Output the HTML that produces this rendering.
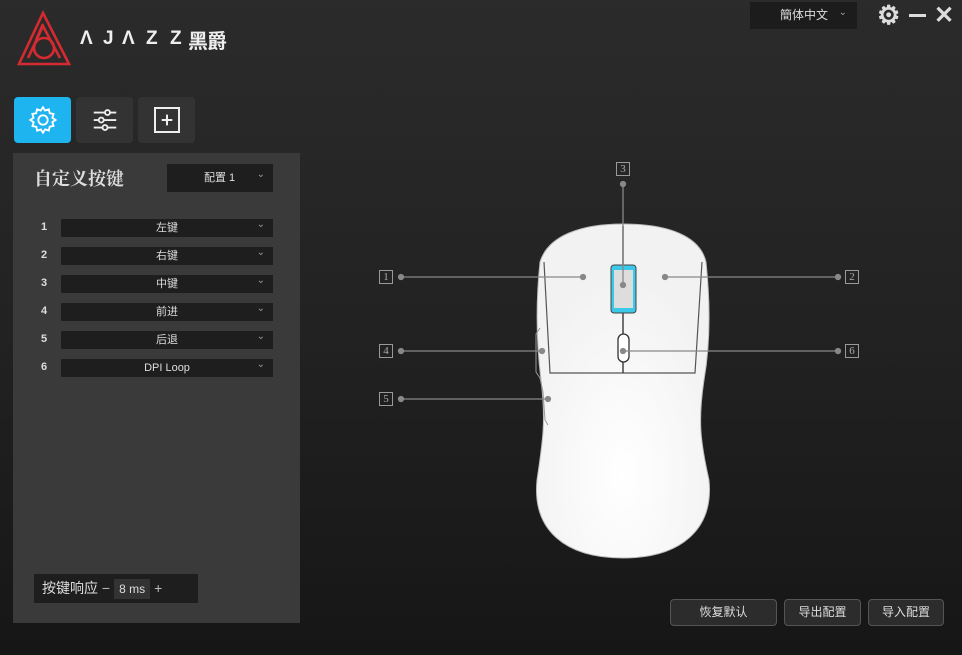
<!DOCTYPE html>
<html><head><meta charset="utf-8"><style>
*{margin:0;padding:0;box-sizing:border-box}
body{width:962px;height:655px;overflow:hidden;background:linear-gradient(180deg,#2b2b2b 0%,#222 50%,#161616 100%);font-family:"Liberation Sans","Noto Sans CJK SC",sans-serif;color:#ddd;position:relative}
.a{position:absolute}
.tab{position:absolute;top:97px;width:57px;height:46px;border-radius:4px;background:#333;display:flex;align-items:center;justify-content:center}
.panel{left:13px;top:153px;width:287px;height:470px;background:#3a3a3a}
.row{position:absolute;left:28px;width:246px;height:18px;font-size:11px}
.row .n{position:absolute;left:13px;top:2px;color:#ddd;font-weight:bold;font-size:11px}
.row .d{position:absolute;left:33px;top:0;width:212px;height:18px;background:#1e1e1e;text-align:center;line-height:18px;color:#ddd}
.row .d:after,.dd:after{content:"⌄";position:absolute;right:8px;top:-3px;color:#999;font-size:10px}
.btn{position:absolute;top:599px;height:27px;background:#2c2c2c;border:1px solid #555;border-radius:4px;font-size:12px;color:#ddd;text-align:center;line-height:25px}
.lbl{position:absolute;width:14px;height:14px;border:1px solid #999;color:#aaa;font-family:"Liberation Serif",serif;font-size:11px;text-align:center;line-height:12px}
</style></head><body>
<svg class="a" style="left:16px;top:10px" width="56" height="56" viewBox="0 0 56 56">
<g fill="none" stroke="#d42a30" stroke-width="2.6" stroke-linejoin="miter">
<path d="M3 54 L27 3 L53 54 Z"/>
<path d="M12 48 L27 16 L44 48"/>
<circle cx="28" cy="38" r="10"/>
<path d="M20 30 L27 14"/>
</g></svg>
<div class="a" style="left:80px;top:28px;font-size:19px;color:#eee;font-weight:bold">
<span class="a" style="left:0">Λ</span><span class="a" style="left:23px">J</span><span class="a" style="left:42px">Λ</span><span class="a" style="left:66px">Z</span><span class="a" style="left:90px">Z</span></div>
<div class="a" style="left:188px;top:25px;font-size:20px;color:#eee;font-weight:bold;letter-spacing:-1px">黑爵</div>

<div class="a" style="left:750px;top:2px;width:107px;height:27px;background:#1c1c1c;font-size:12px;color:#ddd;line-height:27px;padding-left:30px">簡体中文<span style="position:absolute;right:10px;top:-3px;color:#999;font-size:10px">⌄</span></div>
<div class="a" style="left:877px;top:0px;font-size:26px;color:#ddd;font-weight:bold">⚙</div>
<div class="a" style="left:909px;top:14px;width:17px;height:3px;background:#ddd"></div>
<div class="a" style="left:934px;top:1px;font-size:24px;color:#ddd;font-weight:bold">✕</div>

<div class="tab" style="left:14px;background:#1eb4f0"><svg width="32" height="32" viewBox="0 0 24 24" fill="none" stroke="#fff" stroke-width="1.4"><circle cx="12" cy="12" r="3.5"/><path d="M12 2.5l1.6 2.4 2.8-.9.6 2.9 2.9.6-.9 2.8 2.4 1.7-2.4 1.6.9 2.8-2.9.6-.6 2.9-2.8-.9L12 21.5l-1.6-2.4-2.8.9-.6-2.9-2.9-.6.9-2.8L2.5 12l2.4-1.7-.9-2.8 2.9-.6.6-2.9 2.8.9z"/></svg></div>
<div class="tab" style="left:76px"><svg width="30" height="30" viewBox="0 0 24 24" fill="none" stroke="#eee" stroke-width="1.5"><path d="M3 6h18M3 12h18M3 18h18"/><circle cx="14" cy="6" r="2" fill="#333"/><circle cx="9" cy="12" r="2" fill="#333"/><circle cx="12" cy="18" r="2" fill="#333"/></svg></div>
<div class="tab" style="left:138px"><svg width="32" height="32" viewBox="0 0 24 24" fill="none" stroke="#eee" stroke-width="1.5"><path d="M3 3h18v18H3z"/><path d="M12 8v8M8 12h8"/></svg></div>

<div class="a panel"></div>
<div class="a" style="left:34px;top:165px;font-size:18px;color:#ddd;font-family:'Noto Serif CJK SC',serif;font-weight:bold">自定义按键</div>
<div class="a dd" style="left:167px;top:164px;width:106px;height:28px;background:#1e1e1e;font-size:11px;line-height:28px;padding-left:37px;color:#ddd">配置 1</div>
<div class="row" style="top:219px"><span class="n">1</span><span class="d">左键</span></div>
<div class="row" style="top:247px"><span class="n">2</span><span class="d">右键</span></div>
<div class="row" style="top:275px"><span class="n">3</span><span class="d">中键</span></div>
<div class="row" style="top:303px"><span class="n">4</span><span class="d">前进</span></div>
<div class="row" style="top:331px"><span class="n">5</span><span class="d">后退</span></div>
<div class="row" style="top:359px"><span class="n">6</span><span class="d">DPI Loop</span></div>

<div class="a" style="left:34px;top:574px;width:164px;height:29px;background:#1e1e1e;font-size:14px;line-height:29px;padding-left:8px;color:#ddd">按键响应 <span style="color:#bbb">−</span><span style="display:inline-block;background:#333;padding:0 5px;margin:0 4px;font-size:12px;line-height:20px">8 ms</span><span style="color:#bbb">+</span></div>

<svg class="a" style="left:0;top:0" width="962" height="655">
<defs><radialGradient id="g" cx="0.5" cy="0.75" r="0.6"><stop offset="0" stop-color="#fff"/><stop offset="1" stop-color="#f2f2f2"/></radialGradient></defs>
<path d="M540 262 C548 236 580 224 623 224 C668 224 700 236 706 262 C710 300 711 340 704 380 C698 420 700 440 709 480 C714 530 680 558 623 558 C565 558 532 530 537 480 C543 440 546 420 541 380 C536 340 536 300 540 262 Z" fill="url(#g)" stroke="#bbb" stroke-width="1"/>
<path d="M544 262 L550 373 L695 373 L702 262" fill="none" stroke="#555" stroke-width="1.2"/>
<path d="M623 226 L623 373" stroke="#444" stroke-width="1.5"/>
<path d="M540 328 L536 334 L536 372 L540 378 L543 392 L545 420 L548 425" fill="none" stroke="#999" stroke-width="1"/>
<rect x="611" y="265" width="25" height="48" rx="3" fill="#3cc8e8" stroke="#444"/>
<rect x="614" y="270" width="19" height="38" fill="#ddd"/>
<rect x="618" y="334" width="11" height="28" rx="5.5" fill="#fff" stroke="#333" stroke-width="1.3"/>
<g stroke="#888" stroke-width="1.3" fill="#888">
<line x1="401" y1="277" x2="583" y2="277"/><circle cx="401" cy="277" r="2.5"/><circle cx="583" cy="277" r="2.5"/>
<line x1="665" y1="277" x2="838" y2="277"/><circle cx="665" cy="277" r="2.5"/><circle cx="838" cy="277" r="2.5"/>
<line x1="623" y1="184" x2="623" y2="285"/><circle cx="623" cy="184" r="2.5"/><circle cx="623" cy="285" r="2.5"/>
<line x1="401" y1="351" x2="542" y2="351"/><circle cx="401" cy="351" r="2.5"/><circle cx="542" cy="351" r="2.5"/>
<line x1="401" y1="399" x2="548" y2="399"/><circle cx="401" cy="399" r="2.5"/><circle cx="548" cy="399" r="2.5"/>
<line x1="623" y1="351" x2="838" y2="351"/><circle cx="623" cy="351" r="2.5"/><circle cx="838" cy="351" r="2.5"/>
</g></svg>
<div class="lbl" style="left:379px;top:270px">1</div>
<div class="lbl" style="left:845px;top:270px">2</div>
<div class="lbl" style="left:616px;top:162px">3</div>
<div class="lbl" style="left:379px;top:344px">4</div>
<div class="lbl" style="left:379px;top:392px">5</div>
<div class="lbl" style="left:845px;top:344px">6</div>

<div class="btn" style="left:670px;width:107px">恢复默认</div>
<div class="btn" style="left:784px;width:77px">导出配置</div>
<div class="btn" style="left:868px;width:76px">导入配置</div>
</body></html>
